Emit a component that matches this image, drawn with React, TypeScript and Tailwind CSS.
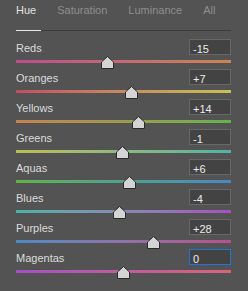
import React from "react";

type Row = { name: string; value: number; grad: string; focus?: boolean };

const rows: Row[] = [
  { name: "Reds", value: -15, grad: "bg-linear-to-r from-[#bc4c8e] to-[#cc8450]" },
  { name: "Oranges", value: 7, grad: "bg-linear-to-r from-[#c44c62] to-[#c4c250]" },
  { name: "Yellows", value: 14, grad: "bg-linear-to-r from-[#c48250] to-[#5eb44c]" },
  { name: "Greens", value: -1, grad: "bg-linear-to-r from-[#bebc52] to-[#4cb4a4]" },
  { name: "Aquas", value: 6, grad: "bg-linear-to-r from-[#60b444] to-[#4888c4]" },
  { name: "Blues", value: -4, grad: "bg-linear-to-r from-[#44b4a4] to-[#a450c0]" },
  { name: "Purples", value: 28, grad: "bg-linear-to-r from-[#4a8ac4] to-[#b8508e]" },
  { name: "Magentas", value: 0, grad: "bg-linear-to-r from-[#a450c2] to-[#d86478]", focus: true },
];

function fmt(v: number) {
  return v > 0 ? `+${v}` : `${v}`;
}

function Thumb({ value }: { value: number }) {
  const center = 107.5 + value * 1.075;
  return (
    <svg
      width="13"
      height="13"
      viewBox="0 0 13 13"
      className="absolute top-[-4px]"
      style={{ left: `${Math.round(center - 6.5)}px` }}
    >
      <path
        d="M6.5 0.5 L12.5 6 L12.5 12.5 L0.5 12.5 L0.5 6 Z"
        fill="#d4d4d4"
        stroke="#2a2a2a"
        strokeWidth="1"
      />
    </svg>
  );
}

export default function App() {
  return (
    <div className="w-[248px] h-[291px] bg-[#535353] pl-[16px] pr-[17px] font-['Liberation_Sans',Arial,sans-serif] text-[11px] select-none">
      <div className="flex gap-[21px] h-[30px] pt-[4px] leading-[13px]">
        <span className="text-[#e2e2e2]">Hue</span>
        <span className="text-[#8e8e8e]">Saturation</span>
        <span className="text-[#8e8e8e]">Luminance</span>
        <span className="text-[#8e8e8e]">All</span>
      </div>
      <div className="h-px bg-[#3c3c3c]">
        <div className="h-px w-[25px] bg-[#e8e8e8]" />
      </div>
      <div className="pt-[8px] flex flex-col">
        {rows.map((r) => (
          <div key={r.name} className="h-[30px]">
            <div className="flex justify-between items-start h-[16px]">
              <span className="text-[#dcdcdc] leading-[16px] pt-[1px]">{r.name}</span>
              <div
                className={
                  r.focus
                    ? "w-[42px] h-[16px] border border-[#1f74e0] bg-[#434343] text-[#ececec] pl-[3px] leading-[14px] pt-[2px]"
                    : "w-[42px] h-[16px] border border-[#686868] bg-[#434343] text-[#ececec] pl-[3px] leading-[14px] pt-[2px]"
                }
              >
                {fmt(r.value)}
              </div>
            </div>
            <div className={`relative mt-[5px] h-[3px] ${r.grad}`}>
              <Thumb value={r.value} />
            </div>
          </div>
        ))}
      </div>
    </div>
  );
}
